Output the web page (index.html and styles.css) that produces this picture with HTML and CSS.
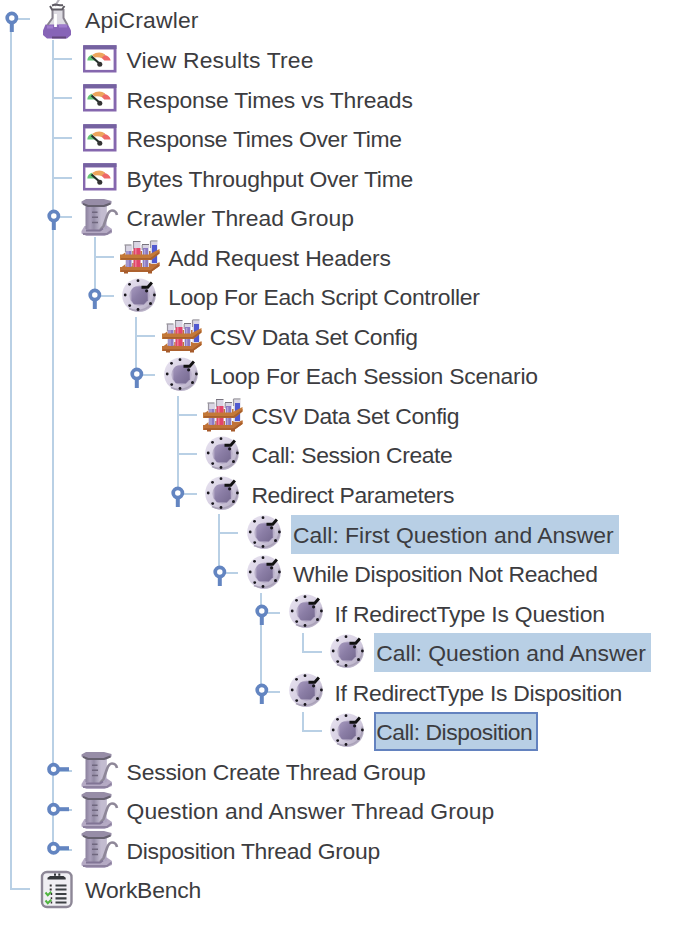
FILE: index.html
```html
<!DOCTYPE html>
<html lang="en">
<head>
<meta charset="utf-8">
<title>ApiCrawler</title>
<link rel="stylesheet" href="styles.css">
</head>
<body>
<svg class="defs" aria-hidden="true">
  <defs>
    <linearGradient id="metal" x1="0" x2="1"><stop offset="0" stop-color="#8b819d"/><stop offset=".22" stop-color="#aaa0bb"/><stop offset=".4" stop-color="#948ca6"/><stop offset=".7" stop-color="#bfb8cd"/><stop offset="1" stop-color="#a99fbd"/></linearGradient>
    <linearGradient id="disc" x1="0" y1="0" x2="1" y2="1"><stop offset="0" stop-color="#e9e4f1"/><stop offset=".55" stop-color="#d5cee1"/><stop offset="1" stop-color="#aaa1b9"/></linearGradient>
    <linearGradient id="core" x1="0" y1="0" x2="1" y2="1"><stop offset="0" stop-color="#a79abf"/><stop offset=".45" stop-color="#8b7ea6"/><stop offset="1" stop-color="#75698f"/></linearGradient>
  </defs>
  <symbol id="open" viewBox="0 0 24 40">
    <path d="M11.8 18v14" stroke="#6385c1" stroke-width="4"/>
    <circle cx="11.8" cy="18" r="4.6" fill="#fff" stroke="#6385c1" stroke-width="3.7"/>
  </symbol>
  <symbol id="closed" viewBox="0 0 24 40">
    <path d="M12 18.2h15" stroke="#6385c1" stroke-width="4"/>
    <circle cx="11.6" cy="18.2" r="4.6" fill="#fff" stroke="#6385c1" stroke-width="3.7"/>
  </symbol>
  <symbol id="flask" viewBox="0 0 40 40">
    <path d="M15.5 9v10L8 29h25l-6.500-10V9z" fill="#dddbe2"/>
    <path d="M8.500 24.500H31l3 6v4.500l-4 3.500H10L6 35v-4.500z" fill="#8764b7"/>
    <path d="M15.500 9v9l-5 7M26.500 9v9l4 7" fill="none" stroke="#88838e" stroke-width="2"/>
    <path d="M18.500 14v13" stroke="#fff" stroke-width="2.800"/>
    <path d="m18 6 5-8" stroke="#b5b2ba" stroke-width="2"/>
    <path d="m13 6 2 3.500h10L27.500 6M15 5.500l3-1 5 .8h3" fill="none" stroke="#5d5a62" stroke-width="1.900"/>
    <path d="M10 27h6m6-1h8" stroke="#9f7ccd" stroke-width="3"/>
    <path d="M15 37.500h14" stroke="#62477b" stroke-width="2"/>
  </symbol>
  <symbol id="meter" viewBox="0 0 40 40">
    <path d="M4 5.300h33.500v27.200H4z" fill="#8567ae"/>
    <path d="M6.400 9.500h28.200v20.400H6.400z" fill="#fff"/>
    <path d="M4.500 7.200h33" stroke="#7562a0" stroke-width="3.800"/>
    <path d="M8.300 20.500q0-4 4.500-5.800l4.500 5.800z" fill="#65c678"/>
    <path d="M13 15q7-4.500 13.200-.6l-2.400 4.200q-5-2-8-1z" fill="#eda55d"/>
    <path d="M25.700 15q5 1.400 6 5.500h-6.400l-2.600-2.800z" fill="#ed6868"/>
    <path d="m12.500 16.500 9 8" stroke="#24302b" stroke-width="2.200"/>
    <circle cx="20.800" cy="24.300" r="2.500" fill="#333"/>
  </symbol>
  <symbol id="spool" viewBox="0 0 40 40">
    <path d="M5.500 28 2.500 33v2.500l5 2.500h18l7.500-3v-4L28 27.500z" fill="#b5aac4"/>
    <path d="M4 36h24l4.500-3.500" stroke="#8d819f" stroke-width="2" fill="none"/>
    <path d="M6.500 6h21v25q-10.500 3-21 0z" fill="url(#metal)"/>
    <path d="m22 31 5.500-9V8h-6z" fill="#c3bcd0"/>
    <path d="M2.500 3.500 7 1h18l7.500 2v2.500l-5 3H8l-5.500-3z" fill="#978da7"/>
    <path d="M4 5.800 9 8h16l6.500-2.500" stroke="#66616f" stroke-width="2" fill="none"/>
    <path d="M13 14.300h5.500M13 19.300h6M13 24.400h6" stroke="#6f677e" stroke-width="1.500"/>
    <path d="m21 32 3.500-4L28 18q2-5.500 5-5.500 4 0 5 4.500" fill="none" stroke="#8e8798" stroke-width="2.600"/>
    <path d="M7 32.500h14l3-2" fill="none" stroke="#817595" stroke-width="1.800"/>
  </symbol>
  <symbol id="rack" viewBox="0 0 40 40">
    <path d="M1 30.500 7 26h32.500v3L31 35H1z" fill="#c07338"/>
    <path d="M1 18.800 7 14h32.500v2L31 21.500H1z" fill="#c07338"/>
    <path d="M8.800 8.500v21M17 5v25M25.500 8v22M34 5v22" stroke="#d9d5e3" stroke-width="7"/>
    <path d="M8.800 14v16M25.500 11v19" stroke="#8b7ac4" stroke-width="5"/>
    <path d="M17 11v19.500" stroke="#e3456b" stroke-width="7"/>
    <path d="M34.500 8v18" stroke="#5059d0" stroke-width="5"/>
    <path d="M15.800 11v19M24.700 12v18M8 14v16" stroke="#fff" stroke-opacity=".35" stroke-width="1.300"/>
    <path d="M4.500 8h7M13 4.500h7.500M22 7.500h7M30.500 4h7" stroke="#77737e" stroke-width="1.200"/>
    <path d="M5.500 8v7M13.500 5v7M22.200 8v5M30.500 4v7" stroke="#99949f" stroke-width="1.200"/>
    <path d="M0 17.500h29l10.500-5.500v4.500l-8 6.500H0z" fill="#c47938"/>
    <path d="M1 21.800h30l8-6" fill="none" stroke="#a8602d" stroke-width="1.700"/>
    <path d="M0 30h31l8.500-5v4L31 35H0z" fill="#c07338"/>
    <path d="M1 34h30l8-6" fill="none" stroke="#a65d2c" stroke-width="1.700"/>
    <path d="M4 34h4v2.500H4zm24 0h4v2.500h-4z" fill="#a65b2b"/>
  </symbol>
  <symbol id="control" viewBox="0 0 40 40">
    <circle cx="19" cy="18.200" r="16.800" fill="url(#disc)"/>
    <path d="M9 31.400q10 5 19.700-1.800 7-7 5.400-15" fill="none" stroke="#aaa2b8" stroke-width="1.700"/>
    <circle cx="19.600" cy="18.800" r="10.200" fill="#b8aec9"/>
    <path d="m14 10 10-1 3.600 3.800.2 10.500-4 4.200-10-.2-2.400-4V13z" fill="url(#core)"/>
    <g fill="#19171d"><circle cx="18" cy="3.700" r="1.400"/><circle cx="9.500" cy="7.300" r="1.400"/><circle cx="5.200" cy="18" r="1.400"/><circle cx="9.700" cy="28.600" r="1.400"/><circle cx="18" cy="32.500" r="1.400"/><circle cx="30.500" cy="26.400" r="1.500"/><circle cx="34.400" cy="18" r="1.400"/><circle cx="26.600" cy="13.800" r="1.600"/></g>
    <path d="M21.500 10.300h6.200l4.200-4.800" fill="none" stroke="#111" stroke-width="2.900"/>
  </symbol>
  <symbol id="clipboard" viewBox="0 0 40 40">
    <rect x="5" y="2" width="29.500" height="35" rx="5" fill="#f0eff3" stroke="#8d8796" stroke-width="2.400"/>
    <path d="M10.500 9.500V7.800L13 6h13.500l2.200 1.800v1.700z" fill="#34373a"/>
    <path d="M17 4.600h2m2.300 0h2" stroke="#34373a" stroke-width="2.200"/>
    <path d="M18.500 15.500h11m-11 4h11m-11 4.500h11m-11 4.300h11m-11 4.200h11" stroke="#3d4144" stroke-width="2.200"/>
    <path d="M12.700 15.500h2m-2 4h2m-1 4.500h1.500m-1.500 4.300h1.500m-1.500 4.200h1.500" stroke="#333" stroke-width="2"/>
    <path d="m8.500 22.500 2.300 2.700 3.400-3.400M8.500 30.500l2.300 2.700 3.400-3.400" fill="none" stroke="#50b43f" stroke-width="2"/>
  </symbol>
</svg>

<ul class="tree root">
  <li><div class="row"><svg class="handle"><use href="#open"/></svg><svg class="icon"><use href="#flask"/></svg><span class="label wide">ApiCrawler</span></div>
    <ul class="tree">
      <li><div class="row"><svg class="handle"></svg><svg class="icon"><use href="#meter"/></svg><span class="label wide">View Results Tree</span></div></li>
      <li><div class="row"><svg class="handle"></svg><svg class="icon"><use href="#meter"/></svg><span class="label snug">Response Times vs Threads</span></div></li>
      <li><div class="row"><svg class="handle"></svg><svg class="icon"><use href="#meter"/></svg><span class="label tighter">Response Times Over Time</span></div></li>
      <li><div class="row"><svg class="handle"></svg><svg class="icon"><use href="#meter"/></svg><span class="label tight">Bytes Throughput Over Time</span></div></li>
      <li><div class="row"><svg class="handle"><use href="#open"/></svg><svg class="icon"><use href="#spool"/></svg><span class="label">Crawler Thread Group</span></div>
        <ul class="tree">
          <li><div class="row"><svg class="handle"></svg><svg class="icon"><use href="#rack"/></svg><span class="label snug">Add Request Headers</span></div></li>
          <li><div class="row"><svg class="handle"><use href="#open"/></svg><svg class="icon"><use href="#control"/></svg><span class="label tighter">Loop For Each Script Controller</span></div>
            <ul class="tree">
              <li><div class="row"><svg class="handle"></svg><svg class="icon"><use href="#rack"/></svg><span class="label tightest">CSV Data Set Config</span></div></li>
              <li><div class="row"><svg class="handle"><use href="#open"/></svg><svg class="icon"><use href="#control"/></svg><span class="label tight">Loop For Each Session Scenario</span></div>
                <ul class="tree">
                  <li><div class="row"><svg class="handle"></svg><svg class="icon"><use href="#rack"/></svg><span class="label tightest">CSV Data Set Config</span></div></li>
                  <li><div class="row"><svg class="handle"></svg><svg class="icon"><use href="#control"/></svg><span class="label tightest">Call: Session Create</span></div></li>
                  <li><div class="row"><svg class="handle"><use href="#open"/></svg><svg class="icon"><use href="#control"/></svg><span class="label tightest">Redirect Parameters</span></div>
                    <ul class="tree">
                      <li><div class="row"><svg class="handle"></svg><svg class="icon"><use href="#control"/></svg><span class="label selected">Call: First Question and Answer</span></div></li>
                      <li><div class="row"><svg class="handle"><use href="#open"/></svg><svg class="icon"><use href="#control"/></svg><span class="label tightest">While Disposition Not Reached</span></div>
                        <ul class="tree">
                          <li><div class="row"><svg class="handle"><use href="#open"/></svg><svg class="icon"><use href="#control"/></svg><span class="label tight">If RedirectType Is Question</span></div>
                            <ul class="tree">
                              <li><div class="row"><svg class="handle"></svg><svg class="icon"><use href="#control"/></svg><span class="label selected">Call: Question and Answer</span></div></li>
                            </ul>
                          </li>
                          <li><div class="row"><svg class="handle"><use href="#open"/></svg><svg class="icon"><use href="#control"/></svg><span class="label tighter">If RedirectType Is Disposition</span></div>
                            <ul class="tree">
                              <li><div class="row"><svg class="handle"></svg><svg class="icon"><use href="#control"/></svg><span class="label selected focused">Call: Disposition</span></div></li>
                            </ul>
                          </li>
                        </ul>
                      </li>
                    </ul>
                  </li>
                </ul>
              </li>
            </ul>
          </li>
        </ul>
      </li>
      <li><div class="row"><svg class="handle"><use href="#closed"/></svg><svg class="icon"><use href="#spool"/></svg><span class="label tight">Session Create Thread Group</span></div></li>
      <li><div class="row"><svg class="handle"><use href="#closed"/></svg><svg class="icon"><use href="#spool"/></svg><span class="label loose">Question and Answer Thread Group</span></div></li>
      <li><div class="row"><svg class="handle"><use href="#closed"/></svg><svg class="icon"><use href="#spool"/></svg><span class="label tighter">Disposition Thread Group</span></div></li>
    </ul>
  </li>
  <li><div class="row"><svg class="handle"></svg><svg class="icon"><use href="#clipboard"/></svg><span class="label tight">WorkBench</span></div></li>
</ul>
</body>
</html>
```
FILE: styles.css
```css
:root {
  --row: 39.55px;
  --line: #b9d0e5;
}

body {
  margin: 0;
  background: #fff;
  color: #3c3c40;
  font: 22.9px/1 "Liberation Sans", Arial, sans-serif;
}

.defs {
  position: absolute;
  width: 0;
  height: 0;
}

.tree {
  list-style: none;
  margin: 0;
  padding: 0 0 0 41.6px;
}

.root {
  padding: 0.2px 0 0;
}

li {
  position: relative;
}

/* Connector running down to the next sibling */
li::before {
  content: "";
  position: absolute;
  left: 10.4px;
  top: 0;
  bottom: 0;
  width: 2px;
  background: var(--line);
}

li:last-child::before {
  bottom: auto;
  height: 20px;
}

.root > li:first-child::before {
  top: 18px;
}

.row {
  position: relative;
  display: flex;
  align-items: center;
  height: var(--row);
}

/* Short branch from the connector to the node */
.row::before {
  content: "";
  position: absolute;
  left: 10.4px;
  top: 18.2px;
  width: 20px;
  height: 2px;
  background: var(--line);
}

.handle {
  position: relative;
  flex: none;
  width: 24px;
  height: 40px;
  margin-right: 13px;
  overflow: visible;
}

symbol {
  overflow: visible;
}

.icon {
  position: relative;
  flex: none;
  width: 40px;
  height: 40px;
  margin-right: 6px;
}

.label {
  box-sizing: border-box;
  height: 39px;
  padding: 0 5px 0 2px;
  line-height: 40px;
  white-space: nowrap;
}

.wide { letter-spacing: 0.17px; }
.loose { letter-spacing: 0.05px; }
.snug { letter-spacing: -0.14px; }
.tight { letter-spacing: -0.22px; }
.tighter { letter-spacing: -0.3px; }
.tightest { letter-spacing: -0.38px; }

.selected {
  background: #b8cfe5;
}

.focused {
  border: 2px solid #6382bf;
  padding: 0 4px 0 0;
  line-height: 36px;
  letter-spacing: -0.47px;
}
```
